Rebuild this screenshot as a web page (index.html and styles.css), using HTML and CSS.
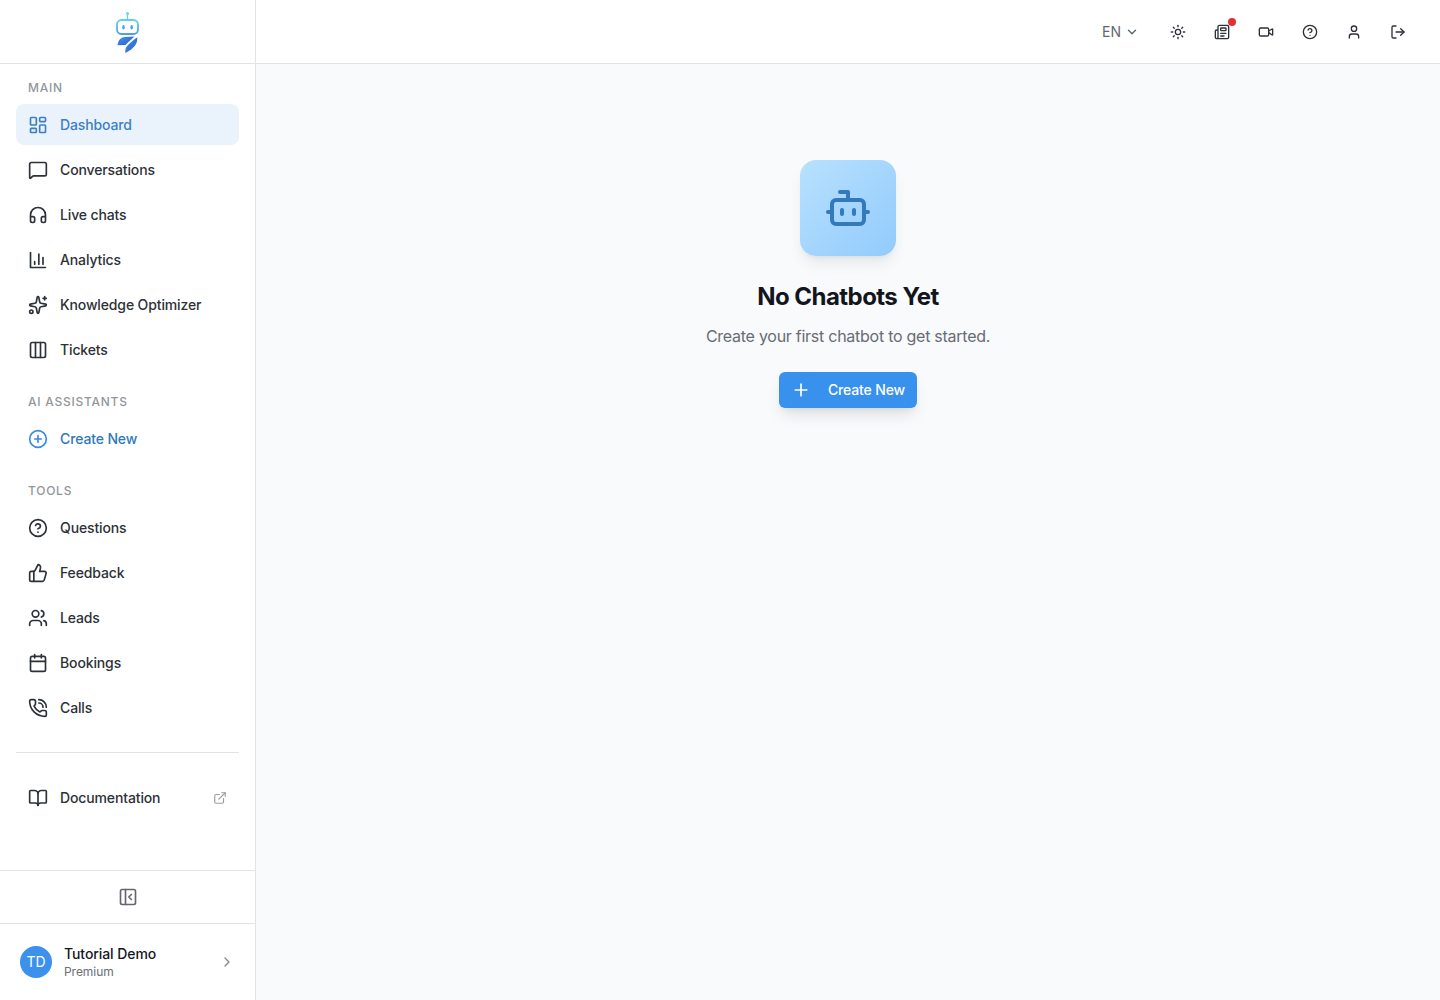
FILE: index.html
```html
<!DOCTYPE html>
<html lang="en">
<head>
    <meta charset="UTF-8">
    <meta name="viewport" content="width=device-width, initial-scale=1.0">
    <title>Dashboard</title>
    <link rel="stylesheet" href="styles.css">
</head>
<body>
    <aside class="sidebar">
        <div class="logo">
            <svg width="28" height="44" viewBox="0 0 28 44">
                <defs>
                    <linearGradient id="head" x1="0" y1="0" x2="0" y2="1">
                        <stop offset="0" stop-color="#5fd3ea"/>
                        <stop offset="1" stop-color="#4a9fe2"/>
                    </linearGradient>
                    <linearGradient id="leaf" x1="0" y1="0" x2="1" y2="1">
                        <stop offset="0" stop-color="#4596ea"/>
                        <stop offset="1" stop-color="#2559cf"/>
                    </linearGradient>
                </defs>
                <circle cx="13.5" cy="3.5" r="1.5" fill="#62d5e6"/>
                <path d="M13.5 5v5" stroke="#62cfe6" stroke-width="1.2"/>
                <rect x="3" y="10" width="21" height="14" rx="4.5" fill="none" stroke="url(#head)" stroke-width="1.8"/>
                <ellipse cx="9.5" cy="17.2" rx="1.3" ry="2.2" fill="#4ba6df"/>
                <ellipse cx="17.7" cy="17.2" rx="1.3" ry="2.2" fill="#4ba6df"/>
                <path d="M3.600 35.200C4 30.500 6.500 27.200 11 27L20.500 26.500C17 29.500 14.500 32 11.500 35z" fill="url(#leaf)"/>
                <path d="M23.200 27.200C24 34 19.500 38.500 11.500 43 10.500 37.500 12.500 35.500 23.200 27.200z" fill="url(#leaf)"/>
            </svg>
        </div>

        <nav class="nav">
            <div class="nav-group">
                <h2 class="nav-label">MAIN</h2>
                <a class="nav-item active">
                    <svg class="icon" viewBox="0 0 24 24"><rect width="7" height="9" x="3" y="3" rx="1"/><rect width="7" height="5" x="14" y="3" rx="1"/><rect width="7" height="9" x="14" y="12" rx="1"/><rect width="7" height="5" x="3" y="16" rx="1"/></svg>
                    <span>Dashboard</span>
                </a>
                <a class="nav-item">
                    <svg class="icon" viewBox="0 0 24 24"><path d="M22 17a2 2 0 0 1-2 2H6.828a2 2 0 0 0-1.414.586l-2.202 2.202A.71.71 0 0 1 2 21.286V5a2 2 0 0 1 2-2h16a2 2 0 0 1 2 2z"/></svg>
                    <span>Conversations</span>
                </a>
                <a class="nav-item">
                    <svg class="icon" viewBox="0 0 24 24"><path d="M3 14h3a2 2 0 0 1 2 2v3a2 2 0 0 1-2 2H5a2 2 0 0 1-2-2v-7a9 9 0 0 1 18 0v7a2 2 0 0 1-2 2h-1a2 2 0 0 1-2-2v-3a2 2 0 0 1 2-2h3"/></svg>
                    <span>Live chats</span>
                </a>
                <a class="nav-item">
                    <svg class="icon" viewBox="0 0 24 24"><path d="M3 3v18h18"/><path d="M18 17V9"/><path d="M13 17V5"/><path d="M8 17v-3"/></svg>
                    <span>Analytics</span>
                </a>
                <a class="nav-item">
                    <svg class="icon" viewBox="0 0 24 24"><path d="M11.017 2.814a1 1 0 0 1 1.966 0l1.051 5.558a2 2 0 0 0 1.594 1.594l5.558 1.051a1 1 0 0 1 0 1.966l-5.558 1.051a2 2 0 0 0-1.594 1.594l-1.051 5.558a1 1 0 0 1-1.966 0l-1.051-5.558a2 2 0 0 0-1.594-1.594l-5.558-1.051a1 1 0 0 1 0-1.966l5.558-1.051a2 2 0 0 0 1.594-1.594z"/><path d="M20 2v4"/><path d="M22 4h-4"/><circle cx="4" cy="20" r="2"/></svg>
                    <span>Knowledge Optimizer</span>
                </a>
                <a class="nav-item">
                    <svg class="icon" viewBox="0 0 24 24"><rect width="18" height="18" x="3" y="3" rx="2"/><path d="M9 3v18"/><path d="M15 3v18"/></svg>
                    <span>Tickets</span>
                </a>
            </div>

            <div class="nav-group">
                <h2 class="nav-label">AI ASSISTANTS</h2>
                <a class="nav-item create">
                    <svg class="icon" viewBox="0 0 24 24"><circle cx="12" cy="12" r="10"/><path d="M8 12h8"/><path d="M12 8v8"/></svg>
                    <span>Create New</span>
                </a>
            </div>

            <div class="nav-group">
                <h2 class="nav-label">TOOLS</h2>
                <a class="nav-item">
                    <svg class="icon" viewBox="0 0 24 24"><circle cx="12" cy="12" r="10"/><path d="M9.090 9a3 3 0 0 1 5.830 1c0 2-3 3-3 3"/><path d="M12 17h.01"/></svg>
                    <span>Questions</span>
                </a>
                <a class="nav-item">
                    <svg class="icon" viewBox="0 0 24 24"><path d="M7 10v12"/><path d="M15 5.880 14 10h5.830a2 2 0 0 1 1.920 2.560l-2.330 8A2 2 0 0 1 17.500 22H4a2 2 0 0 1-2-2v-8a2 2 0 0 1 2-2h2.760a2 2 0 0 0 1.790-1.110L12 2a3.130 3.130 0 0 1 3 3.880Z"/></svg>
                    <span>Feedback</span>
                </a>
                <a class="nav-item">
                    <svg class="icon" viewBox="0 0 24 24"><path d="M16 21v-2a4 4 0 0 0-4-4H6a4 4 0 0 0-4 4v2"/><circle cx="9" cy="7" r="4"/><path d="M22 21v-2a4 4 0 0 0-3-3.870"/><path d="M16 3.130a4 4 0 0 1 0 7.750"/></svg>
                    <span>Leads</span>
                </a>
                <a class="nav-item">
                    <svg class="icon" viewBox="0 0 24 24"><path d="M8 2v4"/><path d="M16 2v4"/><rect width="18" height="18" x="3" y="4" rx="2"/><path d="M3 10h18"/></svg>
                    <span>Bookings</span>
                </a>
                <a class="nav-item">
                    <svg class="icon" viewBox="0 0 24 24"><path d="M13 2a9 9 0 0 1 9 9"/><path d="M13 6a5 5 0 0 1 5 5"/><path d="M13.832 16.568a1 1 0 0 0 1.213-.303l.355-.465A2 2 0 0 1 17 15h3a2 2 0 0 1 2 2v3a2 2 0 0 1-2 2A18 18 0 0 1 2 4a2 2 0 0 1 2-2h3a2 2 0 0 1 2 2v3a2 2 0 0 1-.8 1.600l-.468.351a1 1 0 0 0-.292 1.233 14 14 0 0 0 6.392 6.384"/></svg>
                    <span>Calls</span>
                </a>
            </div>

            <div class="nav-docs">
                <a class="nav-item">
                    <svg class="icon" viewBox="0 0 24 24"><path d="M12 7v14"/><path d="M3 18a1 1 0 0 1-1-1V4a1 1 0 0 1 1-1h5a4 4 0 0 1 4 4 4 4 0 0 1 4-4h5a1 1 0 0 1 1 1v13a1 1 0 0 1-1 1h-6a3 3 0 0 0-3 3 3 3 0 0 0-3-3z"/></svg>
                    <span>Documentation</span>
                    <svg class="icon external" viewBox="0 0 24 24"><path d="M15 3h6v6"/><path d="M10 14 21 3"/><path d="M18 13v6a2 2 0 0 1-2 2H5a2 2 0 0 1-2-2V8a2 2 0 0 1 2-2h6"/></svg>
                </a>
            </div>
        </nav>

        <div class="collapse">
            <svg class="icon" viewBox="0 0 24 24"><rect width="18" height="18" x="3" y="3" rx="2"/><path d="M9 3v18"/><path d="m16 15-3-3 3-3"/></svg>
        </div>

        <div class="profile">
            <div class="avatar">TD</div>
            <div class="profile-text">
                <div class="profile-name">Tutorial Demo</div>
                <div class="profile-plan">Premium</div>
            </div>
            <svg class="icon small" viewBox="0 0 24 24"><path d="m9 18 6-6-6-6"/></svg>
        </div>
    </aside>

    <div class="page">
        <header class="topbar">
            <button class="lang">
                <span>EN</span>
                <svg class="icon" viewBox="0 0 24 24"><path d="m6 9 6 6 6-6"/></svg>
            </button>
            <button class="icon-button">
                <svg class="icon small" viewBox="0 0 24 24"><circle cx="12" cy="12" r="4"/><path d="M12 2v2"/><path d="M12 20v2"/><path d="m4.930 4.930 1.410 1.410"/><path d="m17.660 17.660 1.410 1.410"/><path d="M2 12h2"/><path d="M20 12h2"/><path d="m6.340 17.660-1.410 1.410"/><path d="m19.070 4.930-1.410 1.410"/></svg>
            </button>
            <button class="icon-button">
                <svg class="icon small" viewBox="0 0 24 24"><path d="M15 18h-5"/><path d="M18 14h-8"/><path d="M4 22h16a2 2 0 0 0 2-2V4a2 2 0 0 0-2-2H8a2 2 0 0 0-2 2v16a2 2 0 0 1-4 0v-9a2 2 0 0 1 2-2h2"/><rect width="8" height="4" x="10" y="6" rx="1"/></svg>
                <span class="dot"></span>
            </button>
            <button class="icon-button">
                <svg class="icon small" viewBox="0 0 24 24"><path d="m16 13 5.223 3.482a.5.5 0 0 0 .777-.416V7.870a.5.5 0 0 0-.752-.432L16 10.500"/><rect x="2" y="6" width="14" height="12" rx="2"/></svg>
            </button>
            <button class="icon-button">
                <svg class="icon small" viewBox="0 0 24 24"><circle cx="12" cy="12" r="10"/><path d="M9.090 9a3 3 0 0 1 5.830 1c0 2-3 3-3 3"/><path d="M12 17h.01"/></svg>
            </button>
            <button class="icon-button">
                <svg class="icon small" viewBox="0 0 24 24"><path d="M19 21v-2a4 4 0 0 0-4-4H9a4 4 0 0 0-4 4v2"/><circle cx="12" cy="7" r="4"/></svg>
            </button>
            <button class="icon-button">
                <svg class="icon small" viewBox="0 0 24 24"><path d="m16 17 5-5-5-5"/><path d="M21 12H9"/><path d="M9 21H5a2 2 0 0 1-2-2V5a2 2 0 0 1 2-2h4"/></svg>
            </button>
        </header>

        <main class="content">
            <div class="empty-icon">
                <svg class="icon" viewBox="0 0 24 24"><path d="M12 8V4H8"/><rect width="16" height="12" x="4" y="8" rx="2"/><path d="M2 14h2"/><path d="M20 14h2"/><path d="M15 13v2"/><path d="M9 13v2"/></svg>
            </div>
            <h1 class="empty-title">No Chatbots Yet</h1>
            <p class="empty-text">Create your first chatbot to get started.</p>
            <button class="create-button">
                <svg class="icon" viewBox="0 0 24 24"><path d="M5 12h14"/><path d="M12 5v14"/></svg>
                <span>Create New</span>
            </button>
        </main>
    </div>
</body>
</html>
```
FILE: styles.css
```css
* {
    box-sizing: border-box;
}

body {
    margin: 0;
    height: 100vh;
    display: flex;
    font-family: Inter, sans-serif;
    font-size: 14px;
    color: #2d3138;
    background: #f8fafc;
    overflow: hidden;
}

button {
    font: inherit;
    color: inherit;
    background: none;
    border: none;
    padding: 0;
    cursor: pointer;
}

.icon {
    width: 20px;
    height: 20px;
    flex-shrink: 0;
    fill: none;
    stroke: currentColor;
    stroke-width: 2;
    stroke-linecap: round;
    stroke-linejoin: round;
}

.icon.small {
    width: 16px;
    height: 16px;
}

/* Sidebar */
.sidebar {
    width: 256px;
    flex-shrink: 0;
    display: flex;
    flex-direction: column;
    background: #fff;
    border-right: 1px solid #e1e4e7;
}

.logo {
    height: 64px;
    display: flex;
    align-items: center;
    justify-content: center;
    border-bottom: 1px solid #e1e4e7;
}

.nav {
    flex: 1;
    padding: 8px 16px;
}

.nav-group {
    display: flex;
    flex-direction: column;
    gap: 4px;
    margin-bottom: 16px;
}

.nav-label {
    margin: 0 0 -4px;
    padding: 8px 12px;
    font-size: 12px;
    line-height: 16px;
    font-weight: 500;
    letter-spacing: 0.75px;
    color: #92969b;
}

.nav-item {
    height: 41px;
    display: flex;
    align-items: center;
    gap: 12px;
    padding: 0 12px;
    border-radius: 8px;
    font-weight: 500;
    letter-spacing: -0.13px;
}

.nav-item.active {
    background: #eaf3fc;
    color: #3b7fc4;
}

.nav-item.create {
    color: #2f78bd;
}

.nav-item.create .icon {
    stroke: #3a8be0;
}

.nav-docs {
    margin-top: 24px;
    padding-top: 24px;
    border-top: 1px solid #e1e4e7;
}

.external {
    width: 14px;
    height: 14px;
    margin-left: auto;
    color: #9b9ea2;
}

.collapse {
    height: 53px;
    display: flex;
    align-items: center;
    justify-content: center;
    border-top: 1px solid #e1e4e7;
    color: #63676d;
}

.profile {
    height: 77px;
    display: flex;
    align-items: center;
    gap: 12px;
    padding: 0 20px;
    border-top: 1px solid #e1e4e7;
    color: #85898f;
}

.avatar {
    width: 32px;
    height: 32px;
    padding-bottom: 1px;
    border-radius: 50%;
    display: flex;
    align-items: center;
    justify-content: center;
    background: #3b91ec;
    color: #fff;
}

.profile-text {
    flex: 1;
    padding-bottom: 2px;
}

.profile-name {
    line-height: 20px;
    font-weight: 500;
    letter-spacing: -0.08px;
    color: #15181e;
}

.profile-plan {
    font-size: 12px;
    line-height: 15px;
    letter-spacing: -0.05px;
    color: #6a6e75;
}

/* Top bar */
.page {
    flex: 1;
    display: flex;
    flex-direction: column;
}

.topbar {
    height: 64px;
    display: flex;
    align-items: center;
    justify-content: flex-end;
    gap: 8px;
    padding: 0 24px;
    background: #fff;
    border-bottom: 1px solid #e1e4e7;
}

.lang {
    display: flex;
    align-items: center;
    gap: 4px;
    margin-right: 13px;
    color: #63676d;
}

.lang .icon {
    width: 14px;
    height: 14px;
    stroke-width: 2.5;
}

.icon-button {
    position: relative;
    width: 36px;
    height: 36px;
    display: flex;
    align-items: center;
    justify-content: center;
}

.dot {
    position: absolute;
    top: 4px;
    right: 4px;
    width: 8px;
    height: 8px;
    border-radius: 50%;
    background: #e03137;
}

/* Empty state */
.content {
    flex: 1;
    display: flex;
    flex-direction: column;
    align-items: center;
    padding-top: 96px;
}

.empty-icon {
    width: 96px;
    height: 96px;
    display: flex;
    align-items: center;
    justify-content: center;
    border-radius: 16px;
    background: linear-gradient(135deg, #b8e1fe, #92cbfb);
    color: #3579bd;
    box-shadow: 0 10px 15px -3px rgba(0, 0, 0, 0.08), 0 4px 6px -4px rgba(0, 0, 0, 0.08);
}

.empty-icon .icon {
    width: 48px;
    height: 48px;
}

.empty-title {
    margin: 25px 0 11px;
    font-size: 24px;
    line-height: 32px;
    font-weight: 700;
    letter-spacing: -0.55px;
    color: #12151c;
}

.empty-text {
    margin: 0 0 24px;
    font-size: 16px;
    line-height: 24px;
    letter-spacing: -0.26px;
    color: #686c73;
}

.create-button {
    height: 36px;
    display: flex;
    align-items: center;
    gap: 17px;
    padding: 0 12px;
    border-radius: 6px;
    background: #3891ed;
    color: #fff;
    font-weight: 500;
    line-height: 20px;
    letter-spacing: -0.14px;
    box-shadow: 0 10px 15px -3px rgba(0, 0, 0, 0.1), 0 4px 6px -4px rgba(0, 0, 0, 0.1);
}
```
